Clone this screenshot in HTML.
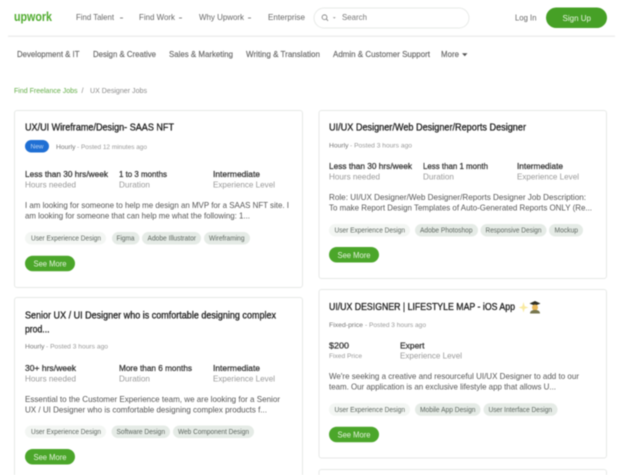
<!DOCTYPE html>
<html lang="en"><head><meta charset="utf-8"><title>UX Designer Jobs</title>
<style>
html,body{margin:0;padding:0;background:#fff;width:624px;height:475px;overflow:hidden}
svg{display:block;filter:blur(.4px)}
text{font-family:"Liberation Sans",sans-serif;white-space:pre}
.n{font-size:8.5px;fill:#666}
.c{font-size:8.3px;fill:#666;stroke:#666;stroke-width:.15}
.t{font-size:9.8px;fill:#222;stroke:#222;stroke-width:.3}
.m{font-size:6.8px;fill:#999}
.mb{font-size:6.8px;fill:#777}
.s{font-size:8.5px;fill:#333;stroke:#333;stroke-width:.25}
.u{font-size:8.5px;fill:#999}
.d{font-size:8.4px;fill:#555}
.g{font-size:7.1px;fill:#5d665f}
.b{font-size:8.3px;fill:#e6f4df}
.card{fill:#fff;stroke:#e6e8e6;stroke-width:1}
.t1{fill:#f3f6f3}.t2{fill:#e5ebe6}
.btn{fill:#4ba62a}
</style></head><body>
<svg xmlns="http://www.w3.org/2000/svg" width="624" height="475" viewBox="0 0 624 475">
<!-- header -->
<text x="14" y="21" textLength="38" lengthAdjust="spacingAndGlyphs" style="font-size:12.5px;font-weight:700;fill:#4fab2e">upwork</text>
<text class="n" x="76" y="20" textLength="38" lengthAdjust="spacingAndGlyphs">Find Talent</text>
<rect x="120" y="17.5" width="3" height="1" fill="#888"/>
<text class="n" x="139" y="20" textLength="36" lengthAdjust="spacingAndGlyphs">Find Work</text>
<rect x="179" y="17.5" width="3" height="1" fill="#888"/>
<text class="n" x="199" y="20" textLength="45" lengthAdjust="spacingAndGlyphs">Why Upwork</text>
<rect x="248" y="17.5" width="3" height="1" fill="#888"/>
<text class="n" x="268" y="20" textLength="37" lengthAdjust="spacingAndGlyphs">Enterprise</text>
<rect x="314" y="8" width="155" height="20" rx="10" fill="#fff" stroke="#e8eae8"/>
<circle cx="324.5" cy="17.2" r="2.4" fill="none" stroke="#777" stroke-width=".8"/>
<path d="M326.3 19l1.8 1.8" stroke="#777" stroke-width=".8"/>
<path d="M332.8 17.2h3l-1.5 1.3z" fill="#888"/>
<text class="n" x="342" y="20.2" textLength="25" lengthAdjust="spacingAndGlyphs" style="fill:#777">Search</text>
<text class="n" x="515" y="20.5" textLength="21.5" lengthAdjust="spacingAndGlyphs">Log In</text>
<rect x="546" y="7.5" width="61" height="20.5" rx="10.2" fill="#46a026"/>
<text x="562.5" y="21" textLength="28.5" lengthAdjust="spacingAndGlyphs" style="font-size:8.6px;fill:#e9f5e3">Sign Up</text>
<rect x="8" y="35.5" width="607" height="1.5" fill="#eeeeee"/>
<!-- categories -->
<text class="c" x="17" y="57.2" textLength="62.5" lengthAdjust="spacingAndGlyphs">Development &amp; IT</text>
<text class="c" x="93" y="57.2" textLength="63" lengthAdjust="spacingAndGlyphs">Design &amp; Creative</text>
<text class="c" x="169" y="57.2" textLength="64" lengthAdjust="spacingAndGlyphs">Sales &amp; Marketing</text>
<text class="c" x="246" y="57.2" textLength="74" lengthAdjust="spacingAndGlyphs">Writing &amp; Translation</text>
<text class="c" x="333" y="57.2" textLength="97" lengthAdjust="spacingAndGlyphs">Admin &amp; Customer Support</text>
<text class="c" x="441" y="57.2" textLength="18" lengthAdjust="spacingAndGlyphs">More</text>
<path d="M462 53.2h5.5l-2.75 3z" fill="#555"/>
<!-- breadcrumbs -->
<text x="14" y="93" textLength="63.5" lengthAdjust="spacingAndGlyphs" style="font-size:7.2px;fill:#62ad46">Find Freelance Jobs</text>
<text x="81.5" y="93" style="font-size:7.2px;fill:#888">/</text>
<text x="90" y="93" textLength="57" lengthAdjust="spacingAndGlyphs" style="font-size:7.2px;fill:#8a8a8a">UX Designer Jobs</text>

<!-- card 1 -->
<rect class="card" x="14.5" y="110.5" width="288" height="177" rx="2.5"/>
<text class="t" x="25" y="130.5" textLength="149" lengthAdjust="spacingAndGlyphs">UX/UI Wireframe/Design- SAAS NFT</text>
<rect x="25" y="140" width="24" height="12.5" rx="6.2" fill="#1f6fd4"/>
<text x="30.5" y="148.7" textLength="13" lengthAdjust="spacingAndGlyphs" style="font-size:6.6px;fill:#bcd6f5">New</text>
<text class="mb" x="56" y="148.8" textLength="19.5" lengthAdjust="spacingAndGlyphs">Hourly</text>
<text class="m" x="77" y="148.8" textLength="70" lengthAdjust="spacingAndGlyphs">- Posted 12 minutes ago</text>
<text class="s" x="25" y="176.8" textLength="83" lengthAdjust="spacingAndGlyphs">Less than 30 hrs/week</text>
<text class="s" x="119" y="176.8" textLength="48" lengthAdjust="spacingAndGlyphs">1 to 3 months</text>
<text class="s" x="213" y="176.8" textLength="47" lengthAdjust="spacingAndGlyphs">Intermediate</text>
<text class="u" x="25" y="187.3" textLength="51" lengthAdjust="spacingAndGlyphs">Hours needed</text>
<text class="u" x="119" y="187.3" textLength="31" lengthAdjust="spacingAndGlyphs">Duration</text>
<text class="u" x="213" y="187.3" textLength="62" lengthAdjust="spacingAndGlyphs">Experience Level</text>
<text class="d" x="25" y="208.2" textLength="264" lengthAdjust="spacingAndGlyphs">I am looking for someone to help me design an MVP for a SAAS NFT site. I</text>
<text class="d" x="25" y="218.7" textLength="225" lengthAdjust="spacingAndGlyphs">am looking for someone that can help me what the following: 1...</text>
<rect class="t1" x="25" y="232" width="81" height="12.5" rx="6.2"/>
<rect class="t2" x="112" y="232" width="27.5" height="12.5" rx="6.2"/>
<rect class="t2" x="142" y="232" width="59" height="12.5" rx="6.2"/>
<rect class="t2" x="204" y="232" width="46" height="12.5" rx="6.2"/>
<text class="g" x="31" y="240.7" textLength="70" lengthAdjust="spacingAndGlyphs">User Experience Design</text>
<text class="g" x="116.5" y="240.7" textLength="18" lengthAdjust="spacingAndGlyphs">Figma</text>
<text class="g" x="147.5" y="240.7" textLength="48.5" lengthAdjust="spacingAndGlyphs">Adobe Illustrator</text>
<text class="g" x="209" y="240.7" textLength="35.5" lengthAdjust="spacingAndGlyphs">Wireframing</text>
<rect class="btn" x="25" y="255.7" width="50" height="15.5" rx="7.7"/>
<text class="b" x="33.5" y="266.5" textLength="33" lengthAdjust="spacingAndGlyphs">See More</text>

<!-- card 2 -->
<rect class="card" x="319" y="110.5" width="287.5" height="168" rx="2.5"/>
<text class="t" x="329" y="130.5" textLength="197" lengthAdjust="spacingAndGlyphs">UI/UX Designer/Web Designer/Reports Designer</text>
<text class="mb" x="329" y="147.5" textLength="19.5" lengthAdjust="spacingAndGlyphs">Hourly</text>
<text class="m" x="350" y="147.5" textLength="62" lengthAdjust="spacingAndGlyphs">- Posted 3 hours ago</text>
<text class="s" x="329" y="168.8" textLength="83" lengthAdjust="spacingAndGlyphs">Less than 30 hrs/week</text>
<text class="s" x="423" y="168.8" textLength="65" lengthAdjust="spacingAndGlyphs">Less than 1 month</text>
<text class="s" x="517" y="168.8" textLength="46" lengthAdjust="spacingAndGlyphs">Intermediate</text>
<text class="u" x="329" y="179.3" textLength="51" lengthAdjust="spacingAndGlyphs">Hours needed</text>
<text class="u" x="423" y="179.3" textLength="31" lengthAdjust="spacingAndGlyphs">Duration</text>
<text class="u" x="517" y="179.3" textLength="62" lengthAdjust="spacingAndGlyphs">Experience Level</text>
<text class="d" x="329" y="199.8" textLength="257" lengthAdjust="spacingAndGlyphs">Role: UI/UX Designer/Web Designer/Reports Designer Job Description:</text>
<text class="d" x="329" y="210.3" textLength="263" lengthAdjust="spacingAndGlyphs">To make Report Design Templates of Auto-Generated Reports ONLY (Re...</text>
<rect class="t1" x="329" y="224" width="81" height="12.5" rx="6.2"/>
<rect class="t2" x="415" y="224" width="63" height="12.5" rx="6.2"/>
<rect class="t2" x="480.5" y="224" width="66" height="12.5" rx="6.2"/>
<rect class="t2" x="549" y="224" width="34" height="12.5" rx="6.2"/>
<text class="g" x="334.5" y="232.6" textLength="70.5" lengthAdjust="spacingAndGlyphs">User Experience Design</text>
<text class="g" x="420" y="232.6" textLength="52.5" lengthAdjust="spacingAndGlyphs">Adobe Photoshop</text>
<text class="g" x="485.5" y="232.6" textLength="56" lengthAdjust="spacingAndGlyphs">Responsive Design</text>
<text class="g" x="554.5" y="232.6" textLength="23.5" lengthAdjust="spacingAndGlyphs">Mockup</text>
<rect class="btn" x="329" y="247" width="50" height="15.5" rx="7.7"/>
<text class="b" x="337.5" y="258" textLength="33" lengthAdjust="spacingAndGlyphs">See More</text>

<!-- card 3 -->
<path class="card" d="M14.5 475V300a2.5 2.5 0 0 1 2.5-2.5H300a2.5 2.5 0 0 1 2.5 2.5V475"/>
<text class="t" x="25" y="318.5" textLength="251" lengthAdjust="spacingAndGlyphs">Senior UX / UI Designer who is comfortable designing complex</text>
<text class="t" x="25" y="332.5" textLength="24.5" lengthAdjust="spacingAndGlyphs">prod...</text>
<text class="mb" x="25" y="348.5" textLength="19.5" lengthAdjust="spacingAndGlyphs">Hourly</text>
<text class="m" x="46" y="348.5" textLength="62" lengthAdjust="spacingAndGlyphs">- Posted 3 hours ago</text>
<text class="s" x="25" y="370.8" textLength="51" lengthAdjust="spacingAndGlyphs">30+ hrs/week</text>
<text class="s" x="119" y="370.8" textLength="73" lengthAdjust="spacingAndGlyphs">More than 6 months</text>
<text class="s" x="213" y="370.8" textLength="47" lengthAdjust="spacingAndGlyphs">Intermediate</text>
<text class="u" x="25" y="381.3" textLength="51" lengthAdjust="spacingAndGlyphs">Hours needed</text>
<text class="u" x="119" y="381.3" textLength="31" lengthAdjust="spacingAndGlyphs">Duration</text>
<text class="u" x="213" y="381.3" textLength="62" lengthAdjust="spacingAndGlyphs">Experience Level</text>
<text class="d" x="25" y="401.8" textLength="255" lengthAdjust="spacingAndGlyphs">Essential to the Customer Experience team, we are looking for a Senior</text>
<text class="d" x="25" y="412.3" textLength="242" lengthAdjust="spacingAndGlyphs">UX / UI Designer who is comfortable designing complex products f...</text>
<rect class="t1" x="25" y="425.5" width="81" height="12.5" rx="6.2"/>
<rect class="t2" x="111.5" y="425.5" width="58.5" height="12.5" rx="6.2"/>
<rect class="t2" x="173" y="425.5" width="81" height="12.5" rx="6.2"/>
<text class="g" x="31" y="434.2" textLength="70" lengthAdjust="spacingAndGlyphs">User Experience Design</text>
<text class="g" x="116.5" y="434.2" textLength="48.5" lengthAdjust="spacingAndGlyphs">Software Design</text>
<text class="g" x="178" y="434.2" textLength="71" lengthAdjust="spacingAndGlyphs">Web Component Design</text>
<rect class="btn" x="25" y="449" width="50" height="15.5" rx="7.7"/>
<text class="b" x="33.5" y="460" textLength="33" lengthAdjust="spacingAndGlyphs">See More</text>

<!-- card 4 -->
<rect class="card" x="319" y="289.5" width="287.5" height="168.5" rx="2.5"/>
<text class="t" x="329" y="310" textLength="186" lengthAdjust="spacingAndGlyphs">UI/UX DESIGNER | LIFESTYLE MAP - iOS App</text>
<path d="M523.5 302l1.2 4.3 3.8 1.2-3.8 1.2-1.2 3.8-1.2-3.8-3.8-1.2 3.8-1.2z" fill="#f9eaa0"/>
<path d="M529.5 303.5l5.5-2.5 5.5 2.5-5.5 2.2z" fill="#2f2f24"/>
<circle cx="535" cy="307.5" r="3" fill="#e8b85a"/>
<path d="M530 313.5c0-2.7 2.2-3.5 5-3.5s5 .8 5 3.5z" fill="#77764e"/>
<text class="mb" x="329" y="327" textLength="34" lengthAdjust="spacingAndGlyphs">Fixed-price</text>
<text class="m" x="365" y="327" textLength="61" lengthAdjust="spacingAndGlyphs">- Posted 3 hours ago</text>
<text class="s" x="329" y="348.3" textLength="20" lengthAdjust="spacingAndGlyphs">$200</text>
<text class="s" x="400" y="348.3" textLength="24.5" lengthAdjust="spacingAndGlyphs">Expert</text>
<text class="m" x="329" y="358" textLength="33" lengthAdjust="spacingAndGlyphs">Fixed Price</text>
<text class="u" x="400" y="358.5" textLength="62" lengthAdjust="spacingAndGlyphs">Experience Level</text>
<text class="d" x="329" y="379" textLength="250" lengthAdjust="spacingAndGlyphs">We're seeking a creative and resourceful UI/UX Designer to add to our</text>
<text class="d" x="329" y="389.5" textLength="227" lengthAdjust="spacingAndGlyphs">team. Our application is an exclusive lifestyle app that allows U...</text>
<rect class="t1" x="329" y="403.3" width="81" height="12.5" rx="6.2"/>
<rect class="t2" x="415" y="403.3" width="65.5" height="12.5" rx="6.2"/>
<rect class="t2" x="483.5" y="403.3" width="74" height="12.5" rx="6.2"/>
<text class="g" x="334.5" y="412" textLength="70.5" lengthAdjust="spacingAndGlyphs">User Experience Design</text>
<text class="g" x="420" y="412" textLength="55.5" lengthAdjust="spacingAndGlyphs">Mobile App Design</text>
<text class="g" x="488.5" y="412" textLength="63.5" lengthAdjust="spacingAndGlyphs">User Interface Design</text>
<rect class="btn" x="329" y="426.7" width="50" height="15.5" rx="7.7"/>
<text class="b" x="337.5" y="437.5" textLength="33" lengthAdjust="spacingAndGlyphs">See More</text>

<!-- card 5 -->
<path class="card" d="M319 475V472a2.5 2.5 0 0 1 2.5-2.5H604a2.5 2.5 0 0 1 2.5 2.5V475"/>
</svg>
</body></html>
